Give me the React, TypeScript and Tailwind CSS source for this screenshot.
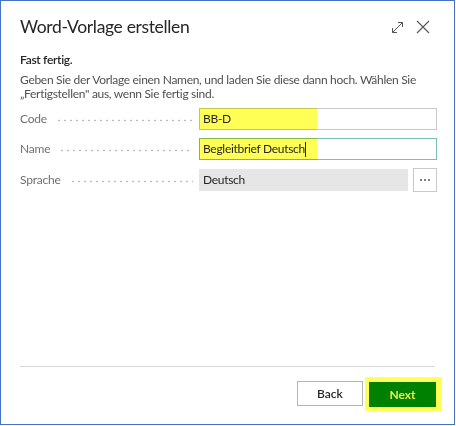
import React from "react";

const font = { fontFamily: '"Segoe UI", Lato, "Open Sans", sans-serif' };

function Leader() {
  return (
    <span className="flex-1 h-[3px] ml-[9px] mr-[6px] mt-[3px] bg-[radial-gradient(circle,#bdbdbd_0.7px,transparent_1.2px)] bg-[length:6px_3px] bg-repeat-x" />
  );
}

function FieldLabel({ text }: { text: string }) {
  return (
    <div className="w-[179px] flex items-center text-[12px] tracking-[-0.2px] text-[#707070]">
      <span>{text}</span>
      <Leader />
    </div>
  );
}

export default function App() {
  return (
    <div className="w-[456px] h-[426px] bg-white" style={font}>
      <div className="w-[455px] h-[425px] border border-[#4472c4] flex flex-col">
        {/* header */}
        <div className="flex items-center justify-between pl-[19px] pr-[24px] pt-[13px]">
          <h1 className="text-[17.5px] tracking-[-0.35px] text-[#262626] leading-[26px]">Word-Vorlage erstellen</h1>
          <div className="flex items-center gap-[12px] text-[#555]">
            <svg width="13" height="13" viewBox="0 0 13 13" fill="none" stroke="currentColor" strokeWidth="1">
              <path d="M1.5 11.5 L11.5 1.5" />
              <path d="M7 1.5 H11.5 V6" />
              <path d="M1.5 7 V11.5 H6" />
            </svg>
            <svg width="14" height="14" viewBox="0 0 14 14" fill="none" stroke="currentColor" strokeWidth="1.1">
              <path d="M1 1 L13 13 M13 1 L1 13" />
            </svg>
          </div>
        </div>

        <div className="px-[19px] pt-[11px]">
          <p className="text-[12px] tracking-[-0.3px] font-semibold text-[#262626] leading-[18px]">Fast fertig.</p>
          <p className="text-[12px] tracking-[-0.3px] text-[#505050] leading-[14px] mt-[4px]">
            Geben Sie der Vorlage einen Namen, und laden Sie diese dann hoch. Wählen Sie
            „Fertigstellen" aus, wenn Sie fertig sind.
          </p>

          <div className="flex flex-col gap-[8px] mt-[7px] w-[417px]">
            <div className="flex items-center">
              <FieldLabel text="Code" />
              <div className="relative flex-1 h-[22px] border border-[#c8c8c8] flex items-center px-[3px] text-[12px] tracking-[-0.3px] text-[#262626]">
                <span className="absolute -left-px -top-px -bottom-px w-[118px] bg-[#ffff55] mix-blend-multiply" />
                <span className="relative">BB-D</span>
              </div>
            </div>
            <div className="flex items-center">
              <FieldLabel text="Name" />
              <div className="relative flex-1 h-[22px] border border-[#7fbcbc] flex items-center px-[3px] text-[12px] tracking-[-0.3px] text-[#262626]">
                <span className="absolute -left-px -top-px -bottom-px w-[118px] bg-[#ffff55] mix-blend-multiply" />
                <span className="relative">Begleitbrief Deutsch</span>
                <span className="relative w-px h-[15px] bg-[#262626]" />
              </div>
            </div>
            <div className="flex items-center">
              <FieldLabel text="Sprache" />
              <div className="flex-1 flex items-center gap-[5px]">
                <div className="flex-1 h-[22px] bg-[#e6e6e6] flex items-center px-[4px] text-[12px] tracking-[-0.3px] text-[#262626]">
                  Deutsch
                </div>
                <div className="w-[24px] h-[24px] border border-[#c8c8c8] flex items-center justify-center gap-[2px]">
                  <span className="w-[2px] h-[2px] rounded-full bg-[#555]" />
                  <span className="w-[2px] h-[2px] rounded-full bg-[#555]" />
                  <span className="w-[2px] h-[2px] rounded-full bg-[#555]" />
                </div>
              </div>
            </div>
          </div>
        </div>

        <div className="flex-1" />

        <div className="mx-[19px] border-t border-[#d8d8d8]" />
        <div className="flex justify-end items-center gap-[2px] pr-[12px] pt-[10px] pb-[13px]">
          <button className="w-[66px] h-[25px] border border-[#b4b4b4] bg-white text-[12px] font-semibold text-[#262626]">
            Back
          </button>
          <div className="pl-[4px] pr-[6px] py-[4px] bg-[#ffff55]">
            <button className="w-[67px] h-[25px] bg-[#008000] text-[12px] font-bold text-[#e8f046]">
              Next
            </button>
          </div>
        </div>
      </div>
    </div>
  );
}
